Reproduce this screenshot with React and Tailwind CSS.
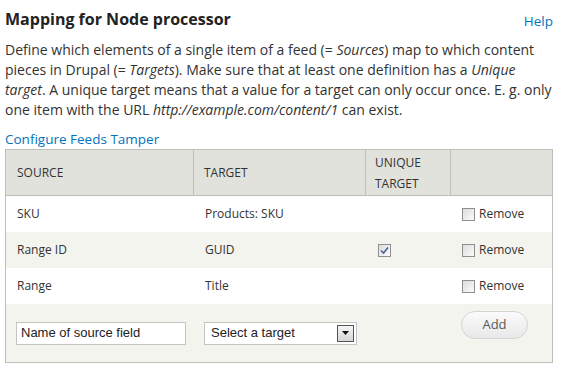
import React from "react";

function Checkbox({ checked }) {
  return (
    <span className="inline-flex h-[13px] w-[13px] items-center justify-center border border-[#8f8f8f] bg-gradient-to-br from-[#dcdcdc] to-[#fbfbfb]">
      {checked && (
        <svg width="9" height="9" viewBox="0 0 9 9">
          <path d="M1 4.5 L3.5 7 L8 1.5" fill="none" stroke="#4a5f97" strokeWidth="1.6" />
        </svg>
      )}
    </span>
  );
}

function RemoveCell() {
  return (
    <div className="flex items-center gap-[4px] pl-[11px]">
      <Checkbox />
      <span>Remove</span>
    </div>
  );
}

export default function App() {
  const rows = [
    { s: "SKU", t: "Products: SKU", u: false, bg: "bg-white" },
    { s: "Range ID", t: "GUID", u: true, bg: "bg-[#f3f4ee]" },
    { s: "Range", t: "Title", u: false, bg: "bg-white" },
  ];
  return (
    <div className="w-[563px] h-[377px] bg-white text-[#333] font-['Open_Sans',sans-serif] text-[14px]">
      <div className="flex items-center justify-between pl-[5px] pr-[10px] pt-[7px]">
        <h2 className="text-[16px] font-bold leading-[24px] text-[#222]">Mapping for Node processor</h2>
        <a className="text-[#0074bd] text-[13.5px] leading-[18px] mt-[4px]">Help</a>
      </div>
      <p className="pl-[5px] mt-[9px] leading-[20px]">
        Define which elements of a single item of a feed (= <em>Sources</em>) map to which content
        <br />
        pieces in Drupal (= <em>Targets</em>). Make sure that at least one definition has a <em>Unique</em>
        <br />
        <em>target</em>. A unique target means that a value for a target can only occur once. E. g. only
        <br />
        one item with the URL <em>http://example.com/content/1</em> can exist.
      </p>
      <a className="block pl-[5px] mt-[10px] text-[#0074bd] text-[13.5px] leading-[18px]">Configure Feeds Tamper</a>
      <div className="ml-[5px] mt-[1px] w-[548px] border border-[#bebfb9] text-[12px]">
        <div className="grid grid-cols-[188px_172px_85px_1fr] bg-[#e1e2dc] h-[46px] border-b border-[#bebfb9]">
          <div className="flex items-center pl-[11px] border-r border-[#bebfb9]">SOURCE</div>
          <div className="flex items-center pl-[10px] border-r border-[#bebfb9]">TARGET</div>
          <div className="flex flex-col justify-center pl-[9px] leading-[21px] border-r border-[#bebfb9]">
            <span>UNIQUE</span>
            <span>TARGET</span>
          </div>
          <div />
        </div>
        {rows.map((r) => (
          <div key={r.s} className={`grid grid-cols-[188px_172px_85px_1fr] h-[36px] items-center ${r.bg}`}>
            <div className="pl-[11px]">{r.s}</div>
            <div className="pl-[11px]">{r.t}</div>
            <div className="pl-[12px] flex items-center">{r.u && <Checkbox checked />}</div>
            <RemoveCell />
          </div>
        ))}
        <div className="grid grid-cols-[188px_172px_85px_1fr] h-[58px] items-center bg-[#f3f4ee]">
          <div className="pl-[10px]">
            <div className="w-[170px] h-[23px] border border-[#c4c4c4] bg-white px-[4px] flex items-center font-['Liberation_Sans',sans-serif] text-[13px] text-[#222]">
              Name of source field
            </div>
          </div>
          <div className="pl-[10px]">
            <div className="w-[153px] h-[23px] border border-[#c4c4c4] bg-white pl-[6px] pr-[2px] flex items-center justify-between font-['Liberation_Sans',sans-serif] text-[13px] text-[#222]">
              <span>Select a target</span>
              <span className="w-[17px] h-[17px] border border-[#555] bg-gradient-to-b from-[#f4f4f4] to-[#d6d6d6] flex items-center justify-center">
                <svg width="7" height="4" viewBox="0 0 7 4"><path d="M0 0 H7 L3.5 4 Z" fill="#111" /></svg>
              </span>
            </div>
          </div>
          <div />
          <div className="pl-[10px] self-start pt-[7px]">
            <div className="w-[67px] h-[28px] rounded-full border border-[#d4d4d4] bg-gradient-to-b from-[#fbfbfb] to-[#e8e8e8] flex items-center justify-center text-[#5a5a5a] text-[13px]">
              Add
            </div>
          </div>
        </div>
      </div>
    </div>
  );
}
